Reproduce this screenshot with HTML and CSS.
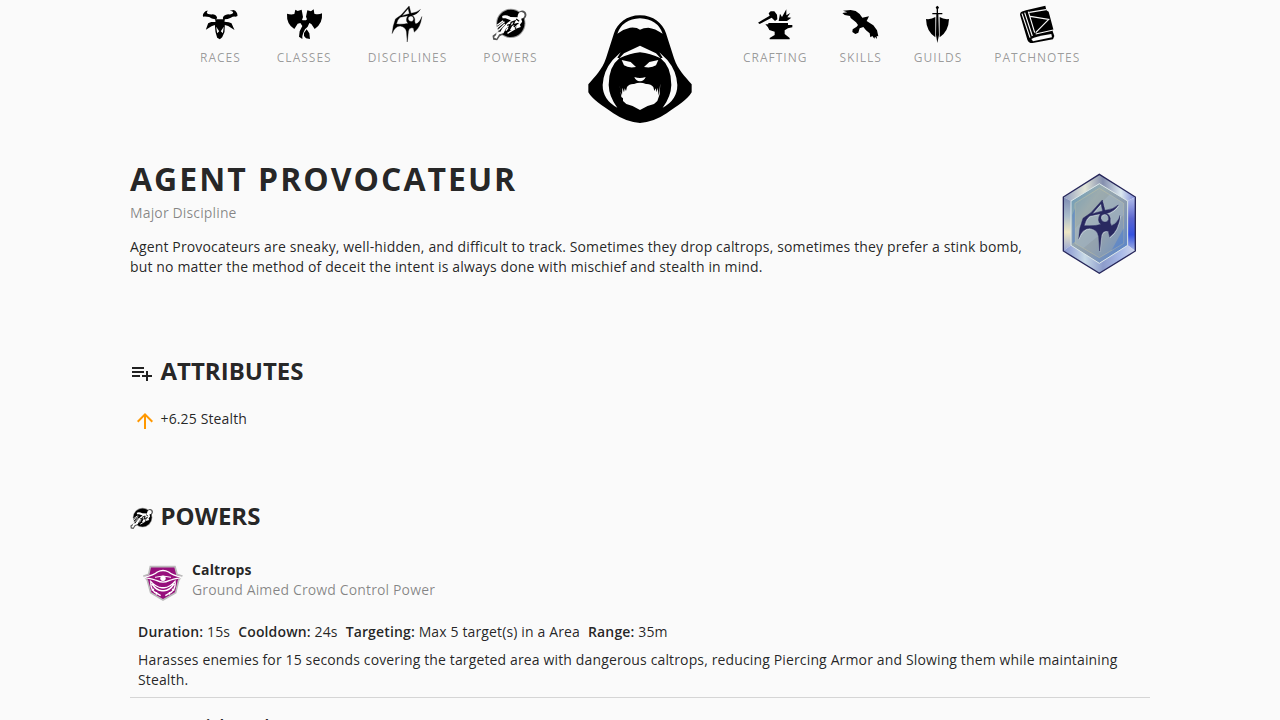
FILE: index.html
```html
<!DOCTYPE html>
<html lang="en">
<head>
<meta charset="utf-8">
<title>Agent Provocateur</title>
<link rel="stylesheet" href="styles.css">
</head>
<body>
<svg class="defs" aria-hidden="true">
  <symbol id="power" viewBox="22.500 9 108 108">
    <circle cx="79" cy="61" r="44" fill="#999"/>
    <path d="M24 98L48 80 98 45 102 28Q112 18 123 27 130 38 120 47L115 62 104 76 60 92 46 100 38 112 26 110Z" fill="#555"/>
    <circle cx="79" cy="61" r="41" fill="#000"/>
    <path d="M53 39Q64 34 78 42L99 43Q100 27 111 27 121 29 120 38 118 46 110 47L113 56 106 65 109 72 94 77 96 69 87 80 76 82 84 67 76 66 64 77 57 91 44 94 36 107 28 103 35 96 36 88 47 87 54 75 68 60 79 52 63 46 54 46Z" fill="#fff"/>
    <path d="M38 67L56 53M37 75L60 56M42 82L61 63M64 83L77 66M69 91L92 77" fill="none" stroke="#fff" stroke-width="4"/>
    <path d="M78 59L91 54 85 66 102 61M68 67L80 63M95 48L104 55M72 76L80 60M88 72L98 62" fill="none" stroke="#000" stroke-width="4"/>
  </symbol>
  <symbol id="sigil" viewBox="70 105 126 153">
    <path fill-rule="evenodd" stroke="currentColor" stroke-width="1.500" d="M142 105L108 143 84 160Q72 190 70 222 82 190 104 190 128 194 131 215L134 258 139 212Q144 194 160 199L164 216Q190 198 196 150 188 176 170 182 164 176 166 160 164 148 154 146 178 140 190 120 174 134 150 136ZM138 116L143 138 112 146ZM104 153L136 146Q124 168 138 178 120 184 88 182 92 162 104 153ZM150 147Q136 149 138 161 142 173 154 171 164 165 160 155 158 148 150 147Z"/>
  </symbol>
</svg>
<header class="nav">
  <nav class="group left">
    <a><svg class="icon" viewBox="37.500 18 108 108"><path fill-rule="evenodd" d="M62 31Q52 32 52 38 54 44 70 43 82 45 83 55L79 58H101L100 54Q102 45 116 43 130 44 131 37 130 32 121 32L132 30Q144 34 144 48L138 50Q132 48 124 53 114 58 106 58L105 65 118 67 126 70 135 90 116 78 106 75 105 96 98 112 91 118 83 113 78 96 76 75 66 79 49 89 56 70 65 66 78 66 77 58Q66 57 59 51 48 49 41 50 37 42 49 33ZM80 80L83 100 89 94ZM103 80L100 100 94 94Z"/></svg><span>Races</span></a>
    <a><svg class="icon" viewBox="288 18 108 108"><path d="M291 41Q303 45 313 42L316 29 323 33 335 29 339 51 336 60 339 61H348L351 58 348 50 352 31 363 34 371 28 373 41Q385 45 396 40 399 71 374 87L364 72 358 69 353 80 345 88 340 98 337 108 337 117 327 110 329 94 337 78 331 69 323 71 313 87Q289 72 291 41ZM342 99L350 88 358 100 360 117 348 115 342 108Z"/></svg><span>Classes</span></a>
    <a><svg class="icon"><use href="#sigil"/></svg><span>Disciplines</span></a>
    <a><svg class="icon"><use href="#power"/></svg><span>Powers</span></a>
  </nav>
  <svg class="logo" viewBox="0 0 360 375">
    <path d="M180 31C140 31 112 55 102 85L78 160C66 195 45 215 25 238V262C38 285 65 300 100 325Q140 352 180 354 220 352 260 325C295 300 322 285 335 262V238C315 215 294 195 282 160L258 85C248 55 220 31 180 31Z"/>
    <g fill="#fafafa">
      <path d="M112 86Q128 42 180 40 232 42 248 86 225 70 205 68 190 68 180 74 170 66 150 68 130 72 112 86Z"/>
      <path d="M180 122L228 145 242 160Q210 145 180 142 150 145 118 160L132 145ZM122 142L112 158 118 160Q86 185 86 240 87 275 112 308 68 285 68 240 70 198 98 165ZM238 142L248 158 242 160Q274 185 274 240 273 275 248 308 292 285 292 240 290 198 262 165Z"/>
      <path d="M125 165L152 171 168 186Q145 190 132 181ZM235 165L208 171 192 186Q215 190 228 181ZM163 216Q180 222 197 216 193 228 180 229 167 228 163 216Z"/>
      <path d="M118 235L121 257 126 272 127 248 132 262 134 250 138 258 141 246Q148 236 162 237 180 230 198 237 212 236 220 246L223 258 227 250 230 262 233 248 236 272 241 235 239 268 232 288 222 297Q198 302 180 315 162 302 139 297L129 288V280L124 276Z"/>
    </g>
  </svg>
  <nav class="group right">
    <a><svg class="icon" viewBox="67 18 108 108"><path d="M70 68L105 47 102 40 108 34 119 34 127 44 128 58 121 63 111 53 75 72ZM132 63L136 41 142 51 155 28 155 46 167 39 158 52 170 53 157 63ZM92 73H101V69H160V75H173V82Q158 84 150 91V102L165 114V118H105V114L120 105V95L104 90Q99 79 92 73Z"/></svg><span>Crafting</span></a>
    <a><svg class="icon" viewBox="324 18 108 108"><path d="M322 39L337 37 324 32 347 30 362 33 374 42 382 53 402 49 395 63 415 76 426 91 430 109 425 108 426 117 420 110 418 116 412 108 406 112 404 100 393 91 385 81 374 85 370 98 361 102 352 96 353 88 365 80 369 75 363 67 347 54 345 48 329 45Z"/></svg><span>Skills</span></a>
    <a><svg class="icon" viewBox="60 18 108 108"><path d="M112 17L117 22 114 28V39H127V43H115L117 105 112 129 108 105 109 43H97V39H110V28L107 22ZM106 51V112Q79 94 78 57 94 59 106 51ZM119 51Q131 59 147 57 146 94 119 112Z"/></svg><span>Guilds</span></a>
    <a><svg class="icon" viewBox="357 18 108 108"><path d="M361 39Q363 35 378 31L436 17 439 31 446 35 460 88 458 94 463 108 459 118 398 129Q386 130 382 119L360 44Z"/><path d="M366 41L390 113M374 38L397 108M385 35L404 98M388 37L438 29M391 49L446 58 407 98M407 102L460 90" fill="none" stroke="#fafafa" stroke-width="3.500"/><path d="M394 117Q405 109 454 102L456 112 399 124Z" fill="#fafafa"/></svg><span>Patchnotes</span></a>
  </nav>
</header>
<main>
  <section class="intro">
    <div class="copy">
      <h1>Agent Provocateur</h1>
      <p class="muted">Major Discipline</p>
      <p class="desc">Agent Provocateurs are sneaky, well-hidden, and difficult to track. Sometimes they drop caltrops, sometimes they prefer a stink bomb, but no matter the method of deceit the intent is always done with mischief and stealth in mind.</p>
    </div>
    <svg class="gem" viewBox="0 0 270 345">
      <defs>
        <linearGradient id="face" x1="0" y1="0" x2="1" y2="1"><stop offset="0" stop-color="#5f97bb"/><stop offset=".3" stop-color="#9aacb0"/><stop offset=".6" stop-color="#8c9caf"/><stop offset="1" stop-color="#4b7ed2"/></linearGradient>
        <linearGradient id="right" x1="0" y1="0" x2="0" y2="1"><stop offset="0" stop-color="#b3bfea"/><stop offset=".4" stop-color="#5c66cf"/><stop offset=".7" stop-color="#3552e0"/><stop offset="1" stop-color="#a8b8e4"/></linearGradient>
        <linearGradient id="left" x1="0" y1="0" x2="0" y2="1"><stop offset="0" stop-color="#7d8bb4"/><stop offset=".35" stop-color="#a9bccb"/><stop offset=".65" stop-color="#eee6c4"/><stop offset="1" stop-color="#98a6d4"/></linearGradient>
        <linearGradient id="top"><stop offset="0" stop-color="#8f9dc0"/><stop offset=".3" stop-color="#e3e6d8"/><stop offset=".55" stop-color="#848fae"/><stop offset=".8" stop-color="#dce8ef"/><stop offset="1" stop-color="#7c88d8"/></linearGradient>
        <linearGradient id="bottom"><stop offset="0" stop-color="#8491cf"/><stop offset=".3" stop-color="#c9dbe8"/><stop offset=".55" stop-color="#8d9ccb"/><stop offset=".8" stop-color="#a9bae8"/><stop offset="1" stop-color="#d3d9ee"/></linearGradient>
      </defs>
      <path d="M133 28L241 96 218 108 133 56 48 108 25 96Z" fill="url(#top)"/>
      <path d="M25 96L48 108V241L25 258Z" fill="url(#left)"/>
      <path d="M241 96L218 108V241L241 258Z" fill="url(#right)"/>
      <path d="M25 258L48 241 133 295 218 241 241 258 133 325Z" fill="url(#bottom)"/>
      <path d="M133 56L218 108V241L133 295 48 241V108Z" fill="url(#face)" stroke="#dbe6e8" stroke-width="3"/>
      <path d="M133 70L206 115V235L133 278 60 235V115Z" fill="#a0adac" fill-opacity=".35" stroke="#d8cf9e" stroke-width="1.500" stroke-opacity=".7"/>
      <path d="M60 190L165 88 206 115 206 150 85 250 60 235Z" fill="#abc0d1" opacity=".35"/>
      <path d="M170 256L206 190V235ZM52 150L60 130V230L52 236Z" fill="#3a72d8" opacity=".4"/>
      <path d="M133 28L241 96V258L133 325 25 258V96Z" fill="none" stroke="#26265a" stroke-width="4"/>
      <svg x="71.500" y="107" width="126" height="153" class="glow"><use href="#sigil"/></svg>
      <svg x="70" y="105" width="126" height="153" class="mark"><use href="#sigil"/></svg>
    </svg>
  </section>
  <section class="attributes">
    <h2><svg class="hicon" viewBox="0 0 24 24"><path d="M14 10H2v2h12v-2zm0-4H2v2h12V6zm4 8v-4h-2v4h-4v2h4v4h2v-4h4v-2h-4zM2 16h8v-2H2v2z"/></svg>Attributes</h2>
    <p class="stat"><svg class="arrow" viewBox="0 0 24 24"><path d="M4 12l1.410 1.410L11 7.830V20h2V7.830l5.580 5.590L20 12l-8-8-8 8z"/></svg>+6.25 Stealth</p>
  </section>
  <section class="powers">
    <h2><svg class="hicon"><use href="#power"/></svg>Powers</h2>
    <article class="power">
      <div class="head">
        <svg class="badge" viewBox="15 9 120 120">
          <path d="M37 20H111L117 43 131 48 122 61 113 98 75 120 38 98 28 61 18 48 32 43Z" fill="#970f7c" stroke="#bbb" stroke-width="5"/>
          <path d="M19 52Q48 45 58 36 75 27 92 36 102 45 131 52 102 58 93 62 75 71 57 62 48 58 19 52ZM36 62Q56 85 75 83 94 85 113 62M42 72Q57 94 75 92 93 94 108 72M38 67Q38 94 58 101L68 107M112 67Q112 94 92 101L82 107M48 87L41 91M56 96L55 104M102 87L109 91M94 96L95 104" fill="none" stroke="#fff" stroke-width="4"/>
          <path d="M51 52Q75 44 99 52" fill="none" stroke="#fff" stroke-width="3"/>
          <circle cx="75" cy="55" r="8" fill="#fff"/>
        </svg>
        <div><h3>Caltrops</h3><p class="muted">Ground Aimed Crowd Control Power</p></div>
      </div>
      <p class="facts"><span><b>Duration:</b> 15s</span><span><b>Cooldown:</b> 24s</span><span><b>Targeting:</b> Max 5 target(s) in a Area</span><span><b>Range:</b> 35m</span></p>
      <p class="text">Harasses enemies for 15 seconds covering the targeted area with dangerous caltrops, reducing Piercing Armor and Slowing them while maintaining Stealth.</p>
    </article>
    <article class="power">
      <div class="head"><div class="badge"></div><div><h3>Stink Bomb</h3></div></div>
    </article>
  </section>
</main>
</body>
</html>
```
FILE: styles.css
```css
* { box-sizing: border-box; }
html { height: 720px; overflow: hidden; }
body { margin: 0; height: 720px; overflow: hidden; background: #fafafa; color: rgba(0,0,0,.87); font: 14px/20px "Open Sans", "Noto Sans", sans-serif; letter-spacing: .14px; }
h1, h2, h3, p { margin: 0; }
.defs { position: absolute; width: 0; height: 0; }
.nav { display: flex; justify-content: center; height: 130px; padding-top: 5px; }
.group { display: flex; padding-top: 1px; }
.left { width: 390px; padding-left: 10px; gap: 36px; }
.right { width: 390px; padding-left: 43px; gap: 32px; }
.group a { display: flex; flex-direction: column; align-items: center; font-size: 12px; letter-spacing: 1px; text-transform: uppercase; color: rgba(0,0,0,.4); }
.icon { width: 36px; height: 36px; overflow: visible; margin-bottom: 6px; fill: #000; color: #000; }
.logo { width: 120px; height: 125px; flex: none; }
main { width: 1020px; margin: 0 auto; }
.intro { display: flex; height: 222px; padding-top: 30px; }
.copy { width: 900px; }
h1 { font-size: 32px; line-height: 38px; letter-spacing: 2px; text-transform: uppercase; }
.muted { color: rgba(0,0,0,.47); }
.intro .muted { margin: 5px 0 14px; }
.gem { width: 90px; height: 115px; margin: 5px 0 0 25px; flex: none; }
.mark { fill: #292960; color: #292960; }
.glow { fill: #dfe8ee; color: #dfe8ee; opacity: .7; }
.attributes { height: 145px; }
h2 { display: flex; align-items: center; font-size: 24px; line-height: 38px; letter-spacing: 0; text-transform: uppercase; }
.hicon { width: 24px; height: 24px; margin: 3px 6.5px 0 0; fill: currentColor; }
.stat { display: flex; align-items: center; padding: 15px 0 0 3px; }
.arrow { width: 24px; height: 24px; margin: 4px 3.5px 0 0; fill: #ff9800; }
.power { padding: 0 8px 7px; border-bottom: 1px solid #d5d5d5; }
h2 + .power { margin-top: 25px; }
.head { display: flex; gap: 9px; padding-left: 5px; }
.badge { width: 40px; height: 40px; margin-top: 3px; }
h3 { font-size: 14px; line-height: 20px; }
.facts { display: flex; gap: 8px; margin: 19px 0 8px; }
.facts b { font-weight: 600; }
.power + .power { padding-top: 17px; }
```
